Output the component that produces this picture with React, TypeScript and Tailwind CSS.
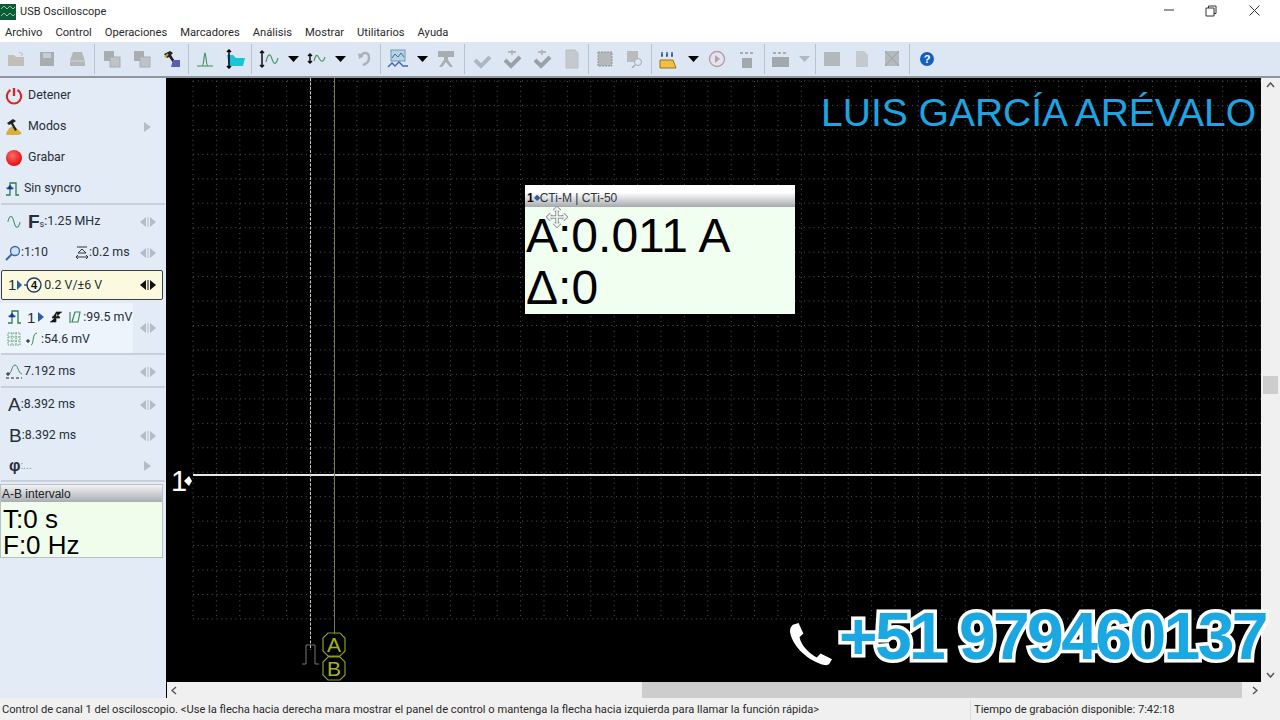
import type { ReactNode } from "react";

const gray = "#b3b7bc";
const sans = "font-['Liberation_Sans',Arial,sans-serif]";
const ui = "font-['Roboto',sans-serif]";

function Ico({ children, w = 20, h = 20 }: { children: ReactNode; w?: number; h?: number }) {
  return (
    <svg width={w} height={h} viewBox={`0 0 ${w} ${h}`} className="shrink-0">
      {children}
    </svg>
  );
}

function Drop({ color = "#000" }: { color?: string }) {
  return (
    <Ico w={11} h={6}>
      <path d="M0 0h11L5.5 6z" fill={color} />
    </Ico>
  );
}

function Sep({ mx = 1 }: { mx?: number }) {
  return <div className="h-[30px] w-px shrink-0 bg-[#b9c3cf]" style={{ marginInline: mx }} />;
}

function Slot({ w = 30, children }: { w?: number; children: ReactNode }) {
  return (
    <div className="flex h-full shrink-0 items-center justify-center" style={{ width: w }}>
      {children}
    </div>
  );
}

function Copies() {
  return (
    <Ico>
      <rect x="2" y="2" width="10" height="10" fill="#a9adb2" />
      <rect x="8" y="8" width="10" height="10" fill="#bfc3c8" stroke="#a9adb2" />
    </Ico>
  );
}

function Check({ dots = false }: { dots?: boolean }) {
  return (
    <Ico>
      {dots && <path d="M6 3h8M10 1v5" stroke={gray} strokeWidth="2" />}
      <path d="M3 11l6 6 9-9" fill="none" stroke={dots ? "#9aa0a6" : "#a9b8c6"} strokeWidth="4" />
    </Ico>
  );
}

function Wave({ w = 14 }: { w?: number }) {
  return (
    <svg width={w} height="12" viewBox="0 0 16 12" className="shrink-0">
      <path d="M1 6c2-9 5-8 7 0s5 8 7 0" fill="none" stroke="#4a9a68" strokeWidth="1.2" />
    </svg>
  );
}

function Pulse({ color = "#2f7d4f" }: { color?: string }) {
  return (
    <svg width="18" height="16" viewBox="0 0 18 16" className="shrink-0">
      <path d="M1 14h4V2h6v12h3" fill="none" stroke={color} strokeWidth="1.3" />
      <path d="M1 7h8M5 4L2 8h6z" fill="#123f8a" stroke="#123f8a" strokeWidth=".6" />
    </svg>
  );
}

function Toolbar() {
  return (
    <div className="flex h-[34px] shrink-0 items-center bg-[#dde7f3] pl-[2px]">
      <Slot>
        <Ico>
          <path d="M1 6h6l2 2h8v9H1z" fill="#c2c0b4" />
          <path d="M12 3l4 2-2 2" fill="none" stroke="#bbb" />
        </Ico>
      </Slot>
      <Slot>
        <Ico>
          <rect x="3" y="3" width="14" height="14" fill="#a9adb2" />
          <rect x="6" y="4" width="8" height="5" fill="#c9ccd0" />
        </Ico>
      </Slot>
      <Slot>
        <Ico>
          <path d="M6 3h9l3 9v5H3v-6z" fill="#b3b7b8" />
          <path d="M3 12h15" stroke="#d2d5d8" />
        </Ico>
      </Slot>
      <Sep mx={2} />
      <Slot><Copies /></Slot>
      <Slot><Copies /></Slot>
      <Slot>
        <Ico>
          <path d="M2 5l6-3 3 2-2 2 7 11-2 1-7-10-2 1z" fill="#222" />
          <path d="M11 11h7v7h-9z" fill="#5a5fb0" />
          <path d="M3 8l3-3" stroke="#c8a030" strokeWidth="2" />
        </Ico>
      </Slot>
      <Sep mx={1} />
      <Slot>
        <Ico>
          <path d="M2 17h16M7 17c2 0 2-13 3-13s1 13 3 13" fill="none" stroke="#3f8f58" strokeWidth="1.1" />
        </Ico>
      </Slot>
      <Slot>
        <Ico w={22}>
          <path d="M3 6h6l3 3h9l-2 8H5z" fill="#16c6d8" />
          <path d="M5 1v18M3 3l2-2 2 2M3 17l2 2 2-2" fill="none" stroke="#000" strokeWidth="1.5" />
        </Ico>
      </Slot>
      <Sep mx={1} />
      <Slot>
        <Ico w={22}>
          <path d="M5 2v16M3 4l2-2 2 2M3 16l2 2 2-2" fill="none" stroke="#111" strokeWidth="1.5" />
          <path d="M9 13c2-9 4-9 6-3s4 6 6-1" fill="none" stroke="#4a9a68" strokeWidth="1.2" />
        </Ico>
      </Slot>
      <Slot w={20}><Drop /></Slot>
      <Slot w={26}>
        <Ico w={20}>
          <path d="M4 5v9M2 7l2-2 2 2M2 12l2 2 2-2" fill="none" stroke="#111" strokeWidth="1.5" />
          <path d="M8 12c2-7 3-7 5-3s4 5 6-1" fill="none" stroke="#4a9a68" strokeWidth="1.2" />
        </Ico>
      </Slot>
      <Slot w={22}><Drop /></Slot>
      <Slot w={26}>
        <Ico w={16}>
          <path d="M4 8c3-6 9-5 9 1 0 4-3 6-6 7" fill="none" stroke="#adb1b6" strokeWidth="2.5" />
          <path d="M2 4l1 6 5-3z" fill="#adb1b6" />
        </Ico>
      </Slot>
      <Sep mx={2.5} />
      <Slot>
        <Ico w={22}>
          <rect x="4" y="1" width="14" height="11" fill="#b7d3e6" stroke="#7795b0" />
          <path d="M5 9l3-4 3 3 3-4 3 4" fill="none" stroke="#38709f" />
          <path d="M1 18l4-4 3 3 4-4 4 4h5" fill="none" stroke="#4066b8" strokeWidth="1.4" />
        </Ico>
      </Slot>
      <Slot w={18}><Drop /></Slot>
      <Slot>
        <Ico>
          <path d="M2 2h16v6H2zM8 8h4v3l5 7h-3l-4-5-4 5H3l5-7z" fill="#a9adb2" />
        </Ico>
      </Slot>
      <Sep mx={2.5} />
      <Slot><Check /></Slot>
      <Slot><Check dots /></Slot>
      <Slot><Check dots /></Slot>
      <Slot>
        <Ico w={14}>
          <path d="M1 1h9l3 3v15H1z" fill="#c5c9cd" stroke="#babec2" />
        </Ico>
      </Slot>
      <Sep mx={1} />
      <Slot>
        <Ico>
          <rect x="3" y="3" width="14" height="14" fill="#b4b8ba" stroke="#8f9396" strokeDasharray="2 1" />
        </Ico>
      </Slot>
      <Slot>
        <Ico>
          <rect x="2" y="2" width="11" height="11" fill="#b8bcbf" />
          <circle cx="13" cy="13" r="3.5" fill="#dde7f3" stroke="#a5a9ad" />
          <path d="M10 16l-3 3" stroke="#a5a9ad" strokeWidth="1.5" />
        </Ico>
      </Slot>
      <Sep mx={1} />
      <Slot>
        <Ico>
          <path d="M3 6h2M8 6h2M13 6h2M4 3v5M9 3v5M14 3v5" stroke="#123f8a" strokeWidth="1.2" />
          <path d="M2 11h13l3 8H2z" fill="#f0c040" stroke="#9a7020" />
        </Ico>
      </Slot>
      <Slot w={20}><Drop /></Slot>
      <Slot w={28}>
        <Ico>
          <circle cx="10" cy="10" r="7.5" fill="none" stroke="#c39aa0" strokeWidth="1.4" />
          <path d="M8 6l5 4-5 4z" fill="#c39aa0" />
        </Ico>
      </Slot>
      <Slot w={32}>
        <Ico>
          <path d="M3 4h3M8 4h3M13 4h3" stroke="#a9adb2" strokeWidth="2" />
          <rect x="5" y="9" width="10" height="10" fill="#a3a8ad" />
        </Ico>
      </Slot>
      <Sep mx={1} />
      <Slot>
        <Ico>
          <path d="M2 4h3M7 4h3M12 4h3" stroke="#a9adb2" strokeWidth="2" />
          <rect x="1" y="8" width="17" height="10" fill="#a3a8ad" />
        </Ico>
      </Slot>
      <Slot w={17}><Drop color={gray} /></Slot>
      <Sep mx={1.5} />
      <Slot>
        <Ico>
          <rect x="2" y="3" width="16" height="14" fill="#b4b8bb" />
        </Ico>
      </Slot>
      <Slot>
        <Ico w={14}>
          <path d="M1 2h8l4 4v12H1z" fill="#c5c9cd" />
        </Ico>
      </Slot>
      <Slot>
        <Ico w={16}>
          <rect x="1" y="2" width="14" height="15" fill="#b5b9bb" />
          <path d="M1 2l14 15M15 2L1 17" stroke="#9a9ea1" />
        </Ico>
      </Slot>
      <Sep mx={2} />
      <Slot>
        <Ico w={16} h={16}>
          <circle cx="8" cy="8" r="7" fill="#1560bd" />
          <text x="8" y="12" textAnchor="middle" fontSize="11" fontWeight="700" fill="#fff" fontFamily="Liberation Sans">?</text>
        </Ico>
      </Slot>
    </div>
  );
}

function Nudge({ dark = false }: { dark?: boolean }) {
  const c = dark ? "#111" : "#b6bcc4";
  return (
    <svg width="18" height="10" viewBox="0 0 18 10" className="shrink-0">
      <path d="M7 0v10L1 5z" fill={c} />
      <path d="M9 0v10" stroke={c} />
      <path d="M11 0v10l6-5z" fill={c} />
    </svg>
  );
}

function More() {
  return (
    <svg width="7" height="10" viewBox="0 0 7 10" className="mr-[6px] shrink-0">
      <path d="M0 0l7 5-7 5z" fill="#b6bcc4" />
    </svg>
  );
}

function Row({
  icon,
  children,
  right,
  h = 31,
  className = "",
}: {
  icon?: ReactNode;
  children: ReactNode;
  right?: ReactNode;
  h?: number;
  className?: string;
}) {
  return (
    <div
      className={`flex shrink-0 items-center pt-[2px] pr-[9px] pl-[5px] text-[12.4px] text-[#26303a] ${className}`}
      style={{ height: h }}
    >
      {icon}
      <div className="flex min-w-0 flex-1 items-center whitespace-nowrap">{children}</div>
      {right}
    </div>
  );
}

function Divider() {
  return <div className="mx-[1px] h-[2px] shrink-0 bg-[#c9d0da]" />;
}

function Sidebar() {
  return (
    <aside className={`flex w-[166px] shrink-0 flex-col bg-[#e3ebf6] ${ui}`}>
      <div className="h-[1px] shrink-0" />
      <Row
        icon={
          <svg width="18" height="18" viewBox="0 0 18 18" className="mr-[5px] shrink-0">
            <path d="M5.5 3a7.2 7.2 0 1 0 7 0" fill="none" stroke="#d8262c" strokeWidth="2.2" />
            <path d="M9 1v8" stroke="#d8262c" strokeWidth="2.4" />
          </svg>
        }
      >
        Detener
      </Row>
      <Row
        icon={
          <svg width="18" height="18" viewBox="0 0 18 18" className="mr-[5px] shrink-0">
            <path d="M1 16c2-6 6-9 9-7 2 1 4 4 7 6l-3 2H2z" fill="#d9b040" />
            <path d="M2 5l6-4 3 2-3 2 4 7-2 1-4-7-2 1z" fill="#222" />
          </svg>
        }
        right={<More />}
      >
        Modos
      </Row>
      <Row
        icon={<span className="mr-[6px] ml-[1px] h-[16px] w-[16px] shrink-0 rounded-full bg-[radial-gradient(circle_at_40%_35%,#ff6b6b,#e21414_70%)]" />}
      >
        Grabar
      </Row>
      <Row icon={<span className="mr-[1px]"><Pulse /></span>}>Sin syncro</Row>
      <Divider />
      <Row
        icon={<span className="mr-[7px] ml-[2px]"><Wave /></span>}
        right={<Nudge />}
      >
        <span className={`text-[19px] leading-none font-bold ${sans}`}>F</span>
        <span className="mt-[6px] text-[9px] leading-none">s</span>
        <span>:1.25 MHz</span>
      </Row>
      <Row
        className="pt-0"
        icon={
          <svg width="16" height="16" viewBox="0 0 16 16" className="shrink-0">
            <circle cx="10" cy="6" r="4.5" fill="#cfe0f2" stroke="#3569a8" strokeWidth="1.3" />
            <path d="M7 9l-6 6" stroke="#3569a8" strokeWidth="2" />
          </svg>
        }
        right={<Nudge />}
      >
        <span className="w-[54px]">:1:10</span>
        <svg width="14" height="16" viewBox="0 0 14 16" className="shrink-0">
          <path d="M2 3h10M3 9l4-4 4 4zM1 13h12M1 13l2-2M1 13l2 2M13 13l-2-2M13 13l-2 2" fill="none" stroke="#333" />
        </svg>
        <span>:0.2 ms</span>
      </Row>
      <div className="mt-[3px] ml-[1px] flex h-[30px] w-[162px] shrink-0 items-center rounded-[2px] border border-[#3a3f46] bg-[#fbf9de] pr-[5px] pl-[6px] text-[12.4px] text-[#26303a]">
        <span className={`text-[15px] ${sans}`}>1</span>
        <svg width="28" height="18" viewBox="0 0 28 18" className="shrink-0">
          <path d="M1 4v10l5-5z" fill="#2f5ea0" />
          <path d="M8 9h4" stroke="#2f5ea0" strokeWidth="1.5" />
          <circle cx="18" cy="9" r="7" fill="none" stroke="#1d3f6e" strokeWidth="1.4" />
          <text x="18" y="13" textAnchor="middle" fontSize="11" fontWeight="700" fill="#111" fontFamily="Liberation Sans">4</text>
        </svg>
        <span className="flex-1">0.2 V/±6 V</span>
        <Nudge dark />
      </div>
      <div className="mt-[3px] flex h-[50px] shrink-0 items-center pr-[9px] text-[12.4px] text-[#26303a]">
        <div className="flex h-full w-[133px] flex-col justify-center gap-[3px] bg-[#edf4fb] pl-[7px]">
          <div className="flex items-center gap-[2px] whitespace-nowrap">
            <Pulse />
            <span className={`text-[15px] leading-none ${sans}`}>1</span>
            <svg width="8" height="10" viewBox="0 0 8 10" className="shrink-0"><path d="M1 0v10l6-5z" fill="#2f5ea0" /></svg>
            <svg width="14" height="14" viewBox="0 0 14 14" className="mx-[2px] shrink-0">
              <path d="M1 12h6V2h6M3 7h8M7 3L3 8h8z" fill="#111" stroke="#222" strokeWidth=".7" />
            </svg>
            <svg width="14" height="14" viewBox="0 0 14 14" className="shrink-0">
              <path d="M3 2v11M8 2l-3 10h6l2-10z" fill="none" stroke="#3b8a58" strokeWidth="1.2" />
            </svg>
            <span>:99.5 mV</span>
          </div>
          <div className="flex items-center gap-[3px] whitespace-nowrap">
            <svg width="14" height="14" viewBox="0 0 14 14" className="shrink-0">
              <path d="M1 1h12v12H1zM5 1v12M1 5h12M1 9h12M9 1v12" fill="none" stroke="#5aa070" strokeDasharray="1.5 1" />
            </svg>
            <svg width="12" height="14" viewBox="0 0 12 14" className="ml-[2px] shrink-0">
              <path d="M0 9h4" stroke="#111" />
              <path d="M2 7v4" stroke="#111" />
              <path d="M5 13c3 0 1-12 6-12" fill="none" stroke="#3b8a58" />
            </svg>
            <span>:54.6 mV</span>
          </div>
        </div>
        <div className="flex flex-1 justify-end"><Nudge /></div>
      </div>
      <Divider />
      <Row
        h={31}
        right={<Nudge />}
        icon={
          <svg width="18" height="18" viewBox="0 0 18 18" className="mr-[1px] shrink-0">
            <path d="M4 11c3-2 3-9 6-9s3 8 7 9" fill="none" stroke="#3b8a58" />
            <path d="M1 15h16" stroke="#222" strokeDasharray="3 2" />
            <path d="M1 11h4M3 9v4" stroke="#222" />
          </svg>
        }
      >
        7.192 ms
      </Row>
      <Divider />
      <Row h={31} className="pl-[8px]" right={<Nudge />}>
        <span className={`text-[19px] leading-none ${sans}`}>A</span>
        <span>:8.392 ms</span>
      </Row>
      <Row h={31} className="pl-[9px]" right={<Nudge />}>
        <span className={`text-[19px] leading-none ${sans}`}>B</span>
        <span>:8.392 ms</span>
      </Row>
      <Row h={30} className="pl-[9px]" right={<More />}>
        <span className={`text-[16px] leading-none font-bold ${sans}`}>φ</span>
        <span className="text-[11px] text-[#8a929b]">:...</span>
      </Row>
      <Divider />
      <div className={`mt-[2px] w-[163px] shrink-0 border border-[#b9c0c8] bg-[#f1fdec] ${sans}`}>
        <div className="flex h-[17px] items-center bg-[linear-gradient(#f2f3f5,#a9adb3)] pl-[1px] text-[12px] text-[#222]">
          A-B intervalo
        </div>
        <div className="h-[55px] pl-[2px] text-[26px] leading-[26px] text-black">
          <div className="pt-[4px]">T:0 s</div>
          <div>F:0 Hz</div>
        </div>
      </div>
    </aside>
  );
}

function ScopeDrawing() {
  const cols = Array.from({ length: 46 }, (_, i) => 26 + i * 23.4);
  const rows = Array.from({ length: 23 }, (_, i) => 3 + i * 24.45);
  return (
    <svg width="1094" height="604" viewBox="0 0 1094 604" className="absolute inset-0">
      {cols.map((x) => (
        <path key={x} d={`M${x} 3V541`} stroke="#565656" strokeDasharray="1 3.9" />
      ))}
      {rows.map((y) => (
        <path key={y} d={`M26 ${y}H1094`} stroke="#565656" strokeDasharray="1 3.7" />
      ))}
      <path d="M26 397H1094" stroke="#e8e8e8" strokeWidth="2" />
      <path d="M143.5 0V572" stroke="#c9c9c9" strokeDasharray="3 1.5" />
      <path d="M167.5 0V556" stroke="#6f7f4c" />
      <path d="M135 586h4V567h9v19h4" fill="none" stroke="#777" />
      <path d="M161 555h12l5 5v13l-5 5h-12l-5-5v-13zM161 579h12l5 5v13l-5 5h-12l-5-5v-13z" fill="none" stroke="#8f9a22" strokeWidth="1.2" />
      <text x="167" y="574" textAnchor="middle" fontSize="21" fill="#a5b02a" fontFamily="Liberation Sans">A</text>
      <text x="167" y="598" textAnchor="middle" fontSize="21" fill="#a5b02a" fontFamily="Liberation Sans">B</text>
      <path d="M17 403l5-5 3 5-3 5z" fill="#fff" />
    </svg>
  );
}

function CursorPanel() {
  return (
    <div className={`absolute top-[107px] left-[358px] h-[129px] w-[270px] bg-[#f1fff1] ${sans}`}>
      <div className="flex h-[22px] items-center bg-[linear-gradient(#fff_35%,#a6a9ad)] pt-[3px] pl-[2px] text-[12px] text-[#30343a]">
        <b className="text-black">1</b>
        <span className="text-[8px] text-[#2f5ea0]">◆</span>
        CTi-M | CTi-50
      </div>
      <div className="pl-[1px] text-[48px] leading-[52px] text-black">
        <div className="mt-[3px]">A:0.011 A</div>
        <div>Δ:0</div>
      </div>
      <svg width="22" height="22" viewBox="0 0 22 22" className="absolute top-[21px] left-[21px]">
        <path d="M11 2v18M2 11h18M8 5l3-3 3 3M8 17l3 3 3-3M5 8l-3 3 3 3M17 8l3 3-3 3" fill="none" stroke="#8f9596" strokeWidth="3.4" />
        <path d="M11 2v18M2 11h18M8 5l3-3 3 3M8 17l3 3 3-3M5 8l-3 3 3 3M17 8l3 3-3 3" fill="none" stroke="#f4f6f4" strokeWidth="1.6" />
      </svg>
    </div>
  );
}

function Scope() {
  return (
    <div className="relative flex-1 bg-black">
      <ScopeDrawing />
      <span className={`absolute top-[389px] left-[4px] text-[29px] leading-none text-white ${sans}`}>1</span>
      <CursorPanel />
      <span className={`absolute top-[14px] right-[5px] whitespace-nowrap text-[39px] leading-[42px] text-[#1da5e2] ${sans}`}>
        LUIS GARCÍA ARÉVALO
      </span>
      <svg width="44" height="46" viewBox="0 0 46 46" className="absolute top-[543px] left-[622px]">
        <path d="M4 3l6-2 5 11-4 4c2 9 10 17 18 21l4-4 12 6-3 5c-2 2-6 1-9 0C17 38 3 24 1 10c0-3 1-5 3-7z" fill="#fff" />
      </svg>
      <span className={`absolute top-[522px] left-[672px] whitespace-nowrap text-[66px] leading-[72px] font-bold tracking-[-2.6px] text-[#1aa7e2] [-webkit-text-stroke:7px_#fff] [paint-order:stroke_fill] ${sans}`}>
        +51 979460137
      </span>
    </div>
  );
}

export default function App() {
  return (
    <div className={`flex h-[720px] w-[1280px] flex-col overflow-hidden bg-white ${ui}`}>
      <div className="flex h-[21px] shrink-0 items-center text-[11px] text-[#2a2a2a]">
        <svg width="16" height="16" viewBox="0 0 16 16" className="mt-[2px] shrink-0">
          <rect width="16" height="16" fill="#0f5a38" />
          <path d="M1 5l3-3 3 3 3-3 3 3 2-2M1 12l3-3 3 3 3-3 3 3 2-2" fill="none" stroke="#7fd0a0" />
        </svg>
        <span className="mt-[3px] ml-[4px]">USB Oscilloscope</span>
        <div className="ml-auto flex h-full items-center">
          <svg width="10" height="2" viewBox="0 0 10 2" className="mt-[-1px] mr-[31px]"><path d="M0 1h10" stroke="#333" /></svg>
          <svg width="12" height="12" viewBox="0 0 12 12" className="mr-[32px]">
            <path d="M3.5 3V1h7.5v7.5H9M1 3h8v8H1z" fill="none" stroke="#333" />
          </svg>
          <svg width="11" height="11" viewBox="0 0 11 11" className="mr-[20px]"><path d="M.5.5l10 10M10.5.5l-10 10" stroke="#333" /></svg>
        </div>
      </div>
      <div className="flex h-[21px] shrink-0 items-center gap-[13px] pt-[3px] pl-[5px] text-[11.2px] text-[#2a2a2a]">
        {["Archivo", "Control", "Operaciones", "Marcadores", "Análisis", "Mostrar", "Utilitarios", "Ayuda"].map((m) => (
          <span key={m}>{m}</span>
        ))}
      </div>
      <Toolbar />
      <div className="h-[2px] shrink-0 bg-[#8f959c]" />
      <div className="flex min-h-0 flex-1">
        <Sidebar />
        <div className="w-px shrink-0 bg-black" />
        <div className="flex min-w-0 flex-1 flex-col">
          <div className="flex min-h-0 flex-1">
            <Scope />
            <div className="flex w-[19px] shrink-0 flex-col items-center justify-between bg-[#f0f0f0] py-[4px]">
              <svg width="9" height="6" viewBox="0 0 9 6"><path d="M1 5l3.5-4L8 5" fill="none" stroke="#555" strokeWidth="1.5" /></svg>
              <div className="mt-[10px] h-[18px] w-[15px] bg-[#cdcdcd]" />
              <svg width="9" height="6" viewBox="0 0 9 6"><path d="M1 1l3.5 4L8 1" fill="none" stroke="#555" strokeWidth="1.5" /></svg>
            </div>
          </div>
          <div className="flex h-[16px] shrink-0 items-center bg-[#f0f0f0] pr-[22px] pl-[4px]">
            <svg width="6" height="9" viewBox="0 0 6 9"><path d="M5 1L1 4.5 5 8" fill="none" stroke="#555" strokeWidth="1.5" /></svg>
            <div className="ml-[465px] h-full flex-1 bg-[#cdcdcd]" />
            <svg width="6" height="9" viewBox="0 0 6 9" className="ml-[10px]"><path d="M1 1l4 3.5L1 8" fill="none" stroke="#555" strokeWidth="1.5" /></svg>
          </div>
        </div>
      </div>
      <div className="flex h-[22px] shrink-0 items-center bg-[#f0f0f0] pt-[2px] text-[11.15px] text-[#2a2a2a]">
        <span className="w-[970px] whitespace-nowrap pl-[2px]">
          Control de canal 1 del osciloscopio. &lt;Use la flecha hacia derecha mara mostrar el panel de control o mantenga la flecha hacia izquierda para llamar la función rápida&gt;
        </span>
        <div className="h-full w-px bg-[#dcdcdc]" />
        <span className="pl-[3px]">Tiempo de grabación disponible: 7:42:18</span>
      </div>
    </div>
  );
}
